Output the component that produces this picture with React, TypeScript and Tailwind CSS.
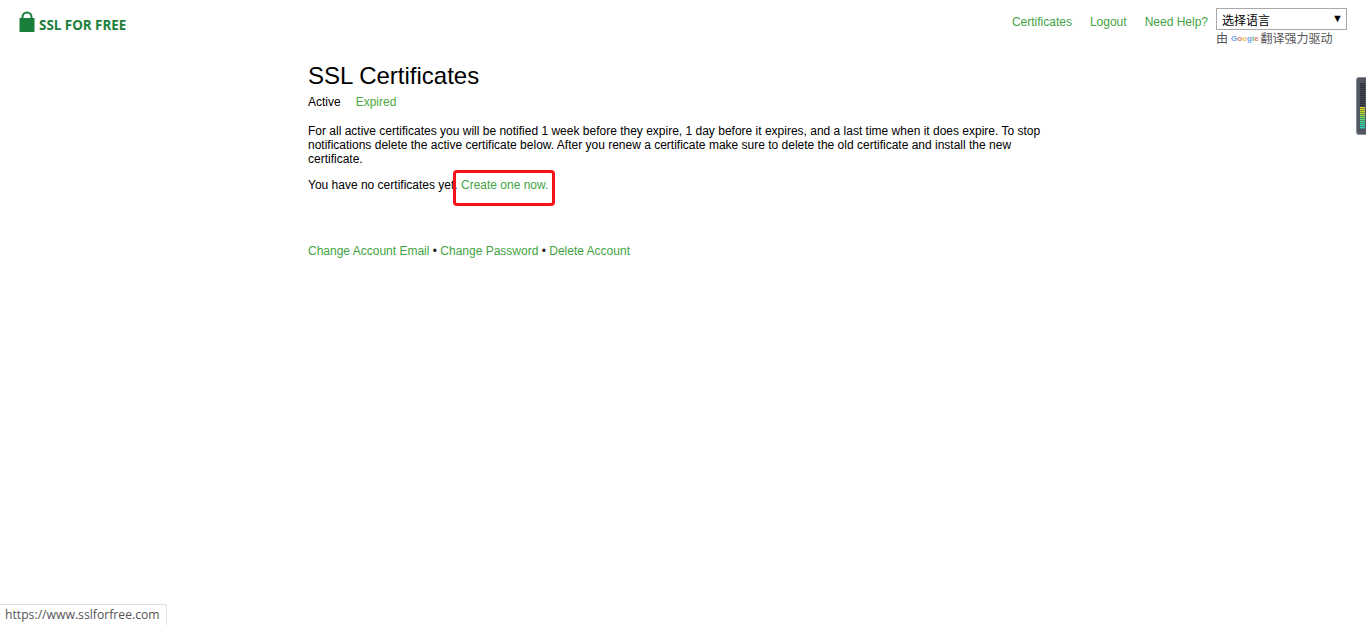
import React from 'react';

const SANS = 'font-["Liberation_Sans",Arial,sans-serif]';
const CJK = 'font-["Liberation_Sans","Noto_Sans_CJK_SC",sans-serif]';

const LEVELS = [
  '#2f323a', '#2f323a', '#2f323a', '#2f323a', '#2f323a', '#2f323a', '#2f323a', '#2f323a', '#2f323a',
  '#2f323a', '#2f323a', '#2f323a',
  '#d8d820', '#d0d820', '#bcd828', '#a4d838', '#88d84c', '#6cd864', '#54d87c', '#40d892', '#34d8a2', '#2cd8ae', '#28d8b6',
];

const Logo = () => (
  <a className="flex items-end">
    <svg width="16" height="21" viewBox="0 0 16 21" className="block">
      <path d="M3.5 8V6a4.5 4.5 0 0 1 9 0v2" fill="none" stroke="#1b7f3b" strokeWidth="2" />
      <rect x="0.5" y="7" width="15" height="14" fill="#1b7f3b" />
    </svg>
    <span className='ml-[4px] font-["Open_Sans",sans-serif] text-[13.4px] font-bold leading-[14px] text-[#1b7f3b]'>
      SSL FOR FREE
    </span>
  </a>
);

const LanguageSelect = () => (
  <div className="w-[131px]">
    <div className="flex h-[22px] items-center justify-between border border-[#a9a9a9] pl-[5px] pr-[3px]">
      <span className={`${CJK} pt-[4px] text-[12px] text-black`}>选择语言</span>
      <span className="pb-[2px] text-[11px] leading-none text-black">▼</span>
    </div>
    <div className={`${CJK} mt-[1px] flex h-[16px] items-center text-[12px] text-[#555]`}>
      <span>由</span>
      <span className='ml-[3px] mr-[2px] font-["Liberation_Sans",sans-serif] text-[8px] font-bold'>
        <span className="text-[#6f9fee]">G</span>
        <span className="text-[#ea7f74]">o</span>
        <span className="text-[#f0c65c]">o</span>
        <span className="text-[#6f9fee]">g</span>
        <span className="text-[#7cc08c]">l</span>
        <span className="text-[#ea7f74]">e</span>
      </span>
      <span>翻译强力驱动</span>
    </div>
  </div>
);

const Header = () => (
  <header className="flex items-start justify-between pl-[19px] pr-[19px] pt-[8px]">
    <div className="pt-[3px]">
      <Logo />
    </div>
    <div className="flex items-start">
      <nav className="flex gap-[18px] pt-[7px] text-[12px] leading-[14px] text-[#3fa33f]">
        <a>Certificates</a>
        <a>Logout</a>
        <a>Need Help?</a>
      </nav>
      <div className="ml-[8px]">
        <LanguageSelect />
      </div>
    </div>
  </header>
);

const Content = () => (
  <main className="mx-auto mt-[15px] w-[750px] text-[12px] leading-[14px] text-black">
    <h1 className="text-[24px] leading-[28px] font-normal">SSL Certificates</h1>
    <div className="mt-[5px] flex gap-[15px]">
      <span>Active</span>
      <a className="text-[#4caa3c]">Expired</a>
    </div>
    <p className="mt-[15px] w-[740px]">
      For all active certificates you will be notified 1 week before they expire, 1 day before it
      expires, and a last time when it does expire. To stop notifications delete the active
      certificate below. After you renew a certificate make sure to delete the old certificate and
      install the new certificate.
    </p>
    <p className="relative mt-[12px]">
      You have no certificates yet. <a className="text-[#3fa33f]">Create one now.</a>
      <span className="absolute left-[145px] top-[-8px] h-[36px] w-[102px] rounded-[4px] border-[3px] border-[#f5141a]" />
    </p>
    <div className="mt-[52px] text-[#3fa33f]">
      <a>Change Account Email</a> <span className="text-[#222]">•</span> <a>Change Password</a>{' '}
      <span className="text-[#222]">•</span> <a>Delete Account</a>
    </div>
  </main>
);

const MeterWidget = () => (
  <svg width="10" height="58" viewBox="0 0 10 58" className="absolute right-0 top-[77px] block">
    <path d="M10 0H3a3 3 0 0 0-3 3v52a3 3 0 0 0 3 3h7z" fill="#8b8e98" />
    <path d="M10 1H3.5A2.5 2.5 0 0 0 1 3.5v51A2.5 2.5 0 0 0 3.5 57H10z" fill="#525663" />
    {LEVELS.map((color, i) => (
      <rect key={i} x="4" y={6 + i * 2} width="5" height="1.4" fill={color} />
    ))}
  </svg>
);

export default function App() {
  return (
    <div className={`${SANS} relative h-[625px] overflow-hidden bg-white`}>
      <Header />
      <Content />
      <MeterWidget />
      <div className='absolute bottom-0 left-0 h-[21px] w-[167px] rounded-tr-[3px] border-t border-r border-[#e0e0e0] bg-white pl-[5px] pt-[1px] font-["Open_Sans",sans-serif] text-[12.2px] leading-[18px] text-[#555]'>
        https://www.sslforfree.com
      </div>
    </div>
  );
}
